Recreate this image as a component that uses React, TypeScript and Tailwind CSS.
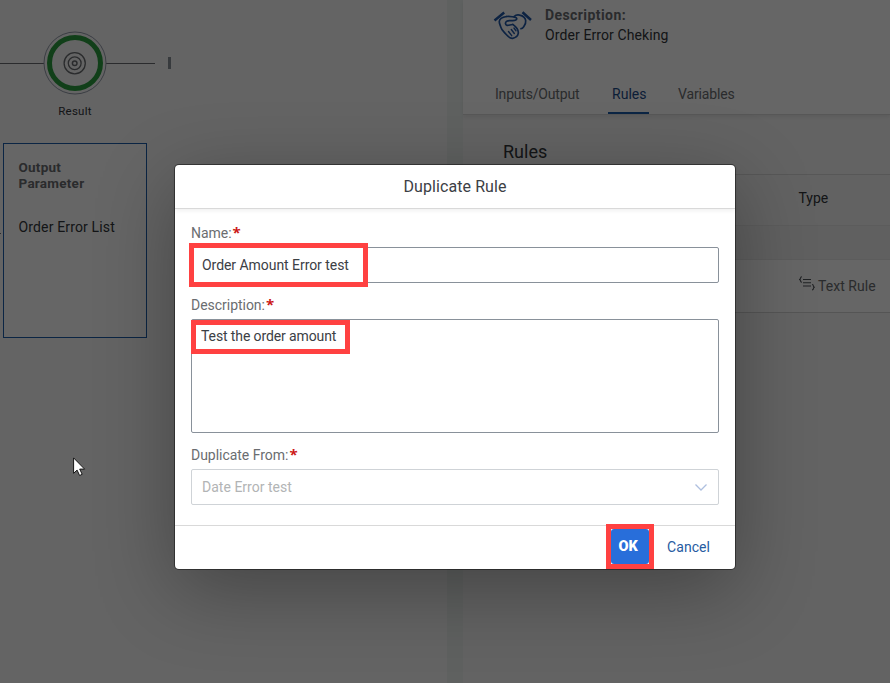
import React from "react";

function ResultNode() {
  return (
    <svg className="absolute left-0 top-0" width="200" height="130" fill="none">
      <path d="M0 63.5H44M106 63.5H155" stroke="#6a6d70" strokeWidth="1" />
      <path d="M168 57h3v12h-3z" fill="#89919a" />
      <circle cx="75" cy="63" r="31" stroke="#9299a8" strokeWidth="1" />
      <circle cx="75" cy="63" r="25.5" stroke="#2b9f3f" strokeWidth="5" />
      <circle cx="74.700" cy="63.300" r="10.600" stroke="#6a6d70" strokeWidth="1.300" />
      <circle cx="74.700" cy="63.300" r="6.400" stroke="#6a6d70" strokeWidth="1.300" />
      <circle cx="74.700" cy="63.300" r="2.300" stroke="#6a6d70" strokeWidth="1.500" />
    </svg>
  );
}

function Handshake() {
  return (
    <svg width="40" height="34" viewBox="0 0 40 34" fill="none" stroke="#2258a6" strokeWidth="1.7" strokeLinecap="round" strokeLinejoin="round">
      <path d="M1.500 13.500 11.200 5.500M29.500 5.300 38 13" strokeWidth="2.500" strokeLinecap="butt" />
      <path d="M13.500 9.500C10.500 10 6.500 11.500 6.300 14.500c-.1 2 1 3.600 1.500 5.600.7 3.100 3.200 5 5.200 7.200 1.900 2.200 4 4.400 6.600 4 2.700-.5 5.100-2 5.600-4.600.4-2-.2-3.700-1.200-5.200-1-1.500-2.600-2.900-4.200-4.100" />
      <path d="M13.500 9.500c3.500-.7 5.500.4 8 .7 1.600.2 2.500.8 2.200 1.900-.3 1.300-2.300 1.400-4 1.500-1.700.1-4.500-.6-6.200.8-1.500 1.200-1.300 3.600.5 4 1.800.4 3.500-1 5.800-.9" />
      <path d="M21 9.500c1.500-1.400 3.600-1.900 5.700-1.400 2.900.6 5.600 2.800 6 5.500.4 2.400-.8 4.500-2 6.200-.8 1.200-1.700 1.900-2.700 1.900" />
      <path d="M15.500 24.500l3.200 4.200M18.300 22.500l3 4M21 21l2 2.800" strokeWidth="1.400" />
    </svg>
  );
}

function TextRuleIcon() {
  return (
    <svg width="18" height="16" viewBox="0 0 18 16" fill="none" stroke="#51555a" strokeWidth="1.100">
      <path d="M4 .8C2.500.8 2.500 1.500 2.500 2.300c0 .8-.4 1.200-1.500 1.200 1.100 0 1.500.4 1.500 1.200 0 .9 0 1.500 1.500 1.500" />
      <path d="M5 3.500h8M5 6.800h8M5 10h8" />
      <path d="M14 8.500c1.400 0 1.400.6 1.400 1.500s.4 1.200 1.400 1.200c-1 0-1.400.3-1.400 1.200s0 1.500-1.400 1.500" />
    </svg>
  );
}

function Label({ children }: { children: React.ReactNode }) {
  return (
    <div className="flex h-7 items-center text-[14px] tracking-[-0.030px] text-[#6a6d70]">
      {children}
      <span className="ml-px -translate-y-px font-['Open_Sans'] text-[15px] font-bold leading-none text-[#cc1919]">*</span>
    </div>
  );
}

function Canvas() {
  return (
    <section className="relative w-[447px] shrink-0 bg-[#fafafa]">
      <ResultNode />
      <div className="absolute left-[45px] top-[104px] w-[60px] text-center text-[11.500px] leading-[14px] tracking-[0.250px] text-[#32363a]">Result</div>
      <div className="absolute left-[3px] top-[143px] h-[195px] w-[144px] border border-[#1d5cab] bg-white pl-[14.500px] pt-[15px] text-[#32363a]">
        <div className="text-[13.500px] font-bold leading-4 tracking-[0.250px] text-[#6a6d70]">Output<br />Parameter</div>
        <div className="mt-[26px] text-[14px] leading-5 tracking-[0.150px]">Order Error List</div>
      </div>
      <div className="absolute left-0 top-[233px] h-px w-px bg-[#6a6d70]" />
    </section>
  );
}

function DetailPanel() {
  return (
    <section className="flex min-w-0 flex-1 flex-col bg-[#f7f7f7] text-[14px] text-[#32363a]">
      <header className="h-[115px] shrink-0 border-b border-[#d9d9d9] bg-white shadow-[0_2px_4px_rgba(0,0,0,0.08)]">
        <div className="flex h-[74px] pl-[30px]">
          <div className="mt-[7px] w-[52px]"><Handshake /></div>
          <div className="pt-[5px] leading-5">
            <div className="font-bold tracking-[0.420px] text-[#6a6d70]">Description:</div>
            <div className="tracking-[0.100px]">Order Error Cheking</div>
          </div>
        </div>
        <nav className="flex h-10 pl-8 leading-[41px] text-[#6a6d70]">
          <span className="w-[113px] tracking-[-0.190px]">Inputs/Output</span>
          <span className="w-[41px] border-b-2 border-[#1d5cab] pl-1 tracking-[0.030px] text-[#1d4c8a]">Rules</span>
          <span className="ml-[29px] tracking-[-0.150px]">Variables</span>
        </nav>
      </header>
      <h2 className="h-[59px] shrink-0 pl-10 pt-[25px] text-[18px] leading-6">Rules</h2>
      <div className="h-[52px] shrink-0 border-y border-t-[#d9d9d9] border-b-[#e5e5e5] bg-[#f5f5f5] pl-[335.500px] leading-[47px]">Type</div>
      <div className="h-[34px] shrink-0 border-b border-[#e5e5e5] bg-[#efefef]" />
      <div className="flex h-[53px] shrink-0 border-b border-[#d4d4d4] bg-white pl-[335px] leading-[52px] text-[#6a6d70]">
        <span className="mt-[16px] w-5"><TextRuleIcon /></span>
        <span className="whitespace-nowrap tracking-[0.050px]">Text Rule</span>
      </div>
    </section>
  );
}

function DuplicateDialog() {
  return (
    <div className="relative h-[404px] w-[560px] rounded bg-white shadow-[0_0_0_1px_rgba(0,0,0,0.42),0_20px_80px_rgba(0,0,0,0.32)]">
      <h1 className="h-11 border-b border-[#d9d9d9] text-center text-[16px] leading-[43px] tracking-[0.080px] text-[#3c4045] shadow-[0_2px_4px_rgba(0,0,0,0.06)]">Duplicate Rule</h1>
      <div className="h-[316px] px-4 pt-[10px]">
        <Label>Name:</Label>
        <div className="h-9 rounded-[2px] border border-[#89919a] pl-[10px] text-[14px] leading-[35px] tracking-[-0.050px] text-[#3c4045]">Order Amount Error test</div>
        <div className="mt-2"><Label>Description:</Label></div>
        <div className="h-[114px] rounded-[2px] border border-[#89919a] pl-[9px] pt-[6px] text-[14px] leading-5 tracking-[-0.110px] text-[#3c4045]">Test the order amount</div>
        <div className="mt-2"><Label>Duplicate From:</Label></div>
        <div className="flex h-9 items-center justify-between rounded-[2px] border border-[#cfd3d7] pl-[10px] pr-[10px] text-[14px] tracking-[0.020px] text-[#b2b4b5]">
          <span>Date Error test</span>
          <svg width="14" height="8" viewBox="0 0 14 8" fill="none" stroke="#aebfdf" strokeWidth="1.300"><path d="m1.500 1.500 5.500 5.500 5.500-5.500" /></svg>
        </div>
      </div>
      <footer className="flex h-11 items-start justify-end border-t border-[#d9d9d9] pr-[25px] pt-[3px] text-[14px] leading-9">
        <button className="mr-[18px] h-[35px] w-[38px] rounded-[3px] bg-[#286eda] pr-1 text-[14.500px] font-black text-white">OK</button>
        <button className="tracking-[0.050px] text-[#275ba1]">Cancel</button>
      </footer>
      <div className="absolute left-[14px] top-[78px] h-[44px] w-[179px] border-[5px] border-[#ff4141]" />
      <div className="absolute left-[16px] top-[155px] h-[34px] w-[159px] border-[5px] border-[#ff4141]" />
      <div className="absolute left-[431px] top-[359px] h-[45px] w-[48px] border-[5px] border-[#ff4141]" />
    </div>
  );
}

export default function App() {
  return (
    <main className="relative flex h-[683px] w-[890px] overflow-hidden font-['Roboto','Liberation_Sans',sans-serif]">
      <Canvas />
      <div className="w-4 shrink-0 bg-[#edf3f1]" />
      <DetailPanel />
      <div className="absolute inset-0 bg-black/60 pl-[175px] pt-[165px]">
        <DuplicateDialog />
      </div>
      <svg className="absolute left-[73px] top-[457px]" width="13" height="20" viewBox="0 0 13 20">
        <path d="M.6.9v15.400l3.500-3.200 2.500 5.400 2.600-1.200-2.500-5.200h4.900z" fill="#fff" stroke="#151515" strokeWidth="1" />
      </svg>
    </main>
  );
}
